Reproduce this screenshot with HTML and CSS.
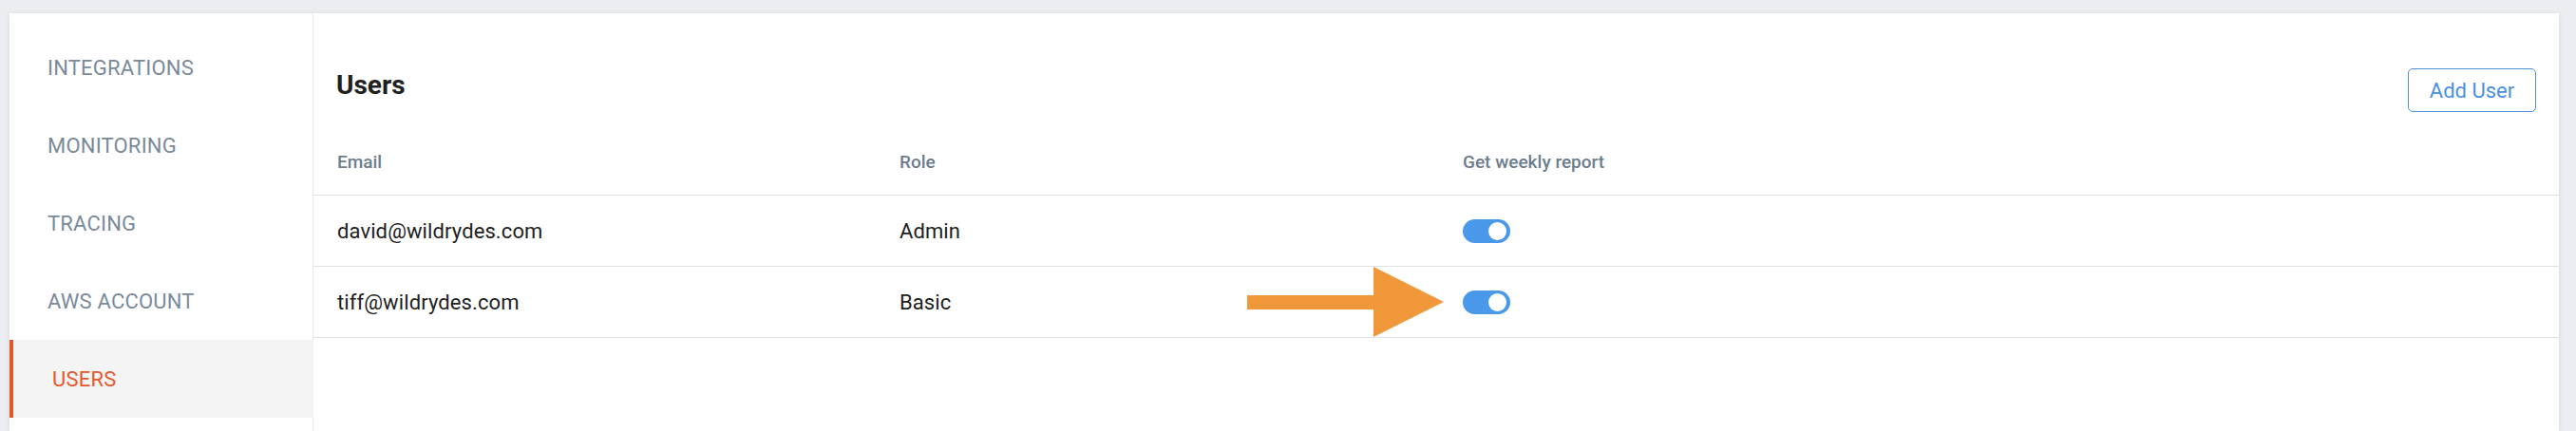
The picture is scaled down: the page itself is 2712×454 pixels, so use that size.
FILE: index.html
```html
<!DOCTYPE html>
<html lang="en">
<head>
<meta charset="utf-8">
<title>Users</title>
<link rel="stylesheet" href="styles.css">
</head>
<body>
<div class="card">
  <nav class="sidebar">
    <div class="nav-item">Integrations</div>
    <div class="nav-item">Monitoring</div>
    <div class="nav-item">Tracing</div>
    <div class="nav-item">AWS Account</div>
    <div class="nav-item active">Users</div>
  </nav>
  <main class="main">
    <div class="main-head">
      <h1 class="title">Users</h1>
      <button class="add-btn">Add User</button>
    </div>
    <div class="table">
      <div class="row head">
        <div class="cell">Email</div>
        <div class="cell">Role</div>
        <div class="cell">Get weekly report</div>
      </div>
      <div class="row">
        <div class="cell">david@wildrydes.com</div>
        <div class="cell">Admin</div>
        <div class="cell"><span class="toggle on"><span class="knob"></span></span></div>
      </div>
      <div class="row">
        <div class="cell">tiff@wildrydes.com</div>
        <div class="cell">Basic</div>
        <div class="cell"><span class="toggle on"><span class="knob"></span></span></div>
      </div>
    </div>
  </main>
</div>
<svg class="arrow" width="207" height="74" viewBox="0 0 207 74" aria-hidden="true">
  <rect x="0" y="30" width="134" height="15" fill="#f0983a"/>
  <polygon points="133,0 133,74 207,37" fill="#f0983a"/>
</svg>
</body>
</html>
```

FILE: styles.css
```css
* { box-sizing: border-box; }

html, body {
  margin: 0;
  padding: 0;
  background: #ebedf0;
  overflow: hidden;
  font-family: Roboto, "Liberation Sans", Arial, sans-serif;
}

body {
  width: 2712px;
  height: 454px;
  padding: 14px 18px 0 10px;
}

.card {
  display: flex;
  height: 440px;
  background: #ffffff;
  box-shadow: 0 1px 5px rgba(40, 50, 60, 0.10);
}

.sidebar {
  width: 320px;
  flex: none;
  padding-top: 16px;
  border-right: 1px solid #e7e8e9;
}

.nav-item {
  height: 82px;
  display: flex;
  align-items: center;
  padding-left: 40px;
  font-size: 22px;
  color: #7a8a9a;
  text-transform: uppercase;
  letter-spacing: 0.2px;
}

.nav-item.active {
  background: #f4f4f4;
  border-left: 4px solid #e4582e;
  padding-left: 41px;
  margin-right: -1px;
  color: #e4582e;
}

.main {
  flex: 1;
  min-width: 0;
}

.main-head {
  display: flex;
  justify-content: space-between;
  align-items: flex-start;
  padding: 58px 24px 0 24px;
}

.title {
  margin: 4px 0 0 0;
  font-size: 28px;
  line-height: 28px;
  font-weight: 700;
  color: #1f1f1f;
}

.add-btn {
  width: 135px;
  height: 46px;
  border: 1.5px solid #4a90e2;
  border-radius: 5px;
  background: #fff;
  color: #4a90e2;
  font-family: Roboto, "Liberation Sans", Arial, sans-serif;
  font-size: 22px;
  padding: 0;
}

.table {
  margin-top: 42px;
}

.row {
  display: grid;
  grid-template-columns: 592px 593px 1fr;
  align-items: center;
  padding: 0 25px;
  height: 75px;
  border-bottom: 1px solid #e2e2e2;
  font-size: 22px;
  letter-spacing: 0.1px;
  color: #212121;
}

.row.head {
  height: 46px;
  align-items: start;
  font-size: 19px;
  line-height: 22px;
  font-weight: 500;
  letter-spacing: 0;
  color: #6c7d8e;
}

.toggle {
  display: block;
  position: relative;
  width: 50px;
  height: 25px;
  border-radius: 13px;
  background: #4a98e9;
}

.toggle .knob {
  position: absolute;
  top: 3px;
  right: 4px;
  width: 19px;
  height: 19px;
  border-radius: 50%;
  background: #ffffff;
}

.arrow {
  position: absolute;
  left: 1313px;
  top: 281px;
}
```
